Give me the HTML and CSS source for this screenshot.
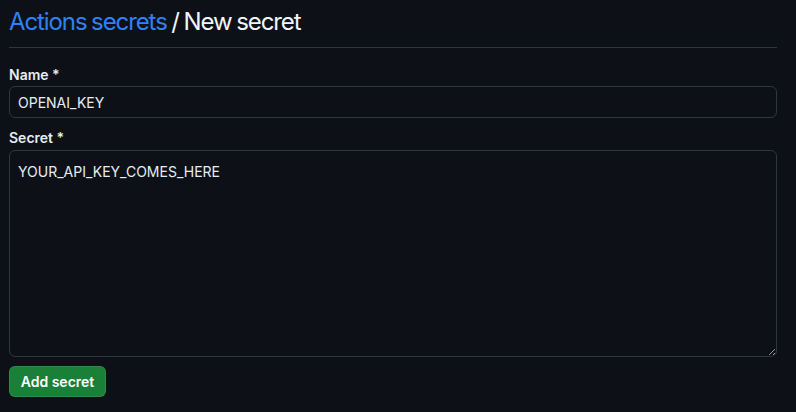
FILE: index.html
```html
<!DOCTYPE html>
<html>
<head>
<meta charset="utf-8">
<link rel="stylesheet" href="styles.css">
</head>
<body>
<div class="page">
  <h1 class="title"><a class="crumb" href="#">Actions secrets</a> / New secret</h1>
  <form class="form">
    <label class="label" for="name">Name *</label>
    <input class="input" id="name" type="text" value="OPENAI_KEY">
    <label class="label label-secret" for="secret">Secret *</label>
    <textarea class="textarea" id="secret">YOUR_API_KEY_COMES_HERE</textarea>
    <div class="actions"><button class="btn" type="button">Add secret</button></div>
  </form>
</div>
</body>
</html>
```
FILE: styles.css
```css
html, body {
  margin: 0;
  padding: 0;
  background: #0d1117;
}
body {
  font-family: Inter, "Noto Sans", sans-serif;
  color: #e6edf3;
}
.page {
  padding: 0 19px 0 9px;
}
.title {
  margin: 0;
  height: 48px;
  box-sizing: border-box;
  padding-top: 7px;
  font-size: 24px;
  font-weight: 400;
  line-height: 30px;
  letter-spacing: -1.1px;
  word-spacing: -1px;
  color: #f0f6fc;
  border-bottom: 1px solid #30363d;
}
.crumb {
  color: #2f81f7;
  text-decoration: none;
}
.form {
  display: flex;
  flex-direction: column;
  padding-top: 17px;
}
.label {
  font-size: 14px;
  font-weight: 600;
  line-height: 20px;
  margin-bottom: 1px;
}
.label-secret {
  margin-top: 10px;
  margin-bottom: 2px;
}
.input, .textarea {
  box-sizing: border-box;
  width: 100%;
  background: #0d1117;
  border: 1px solid #30363d;
  border-radius: 6px;
  color: #e6edf3;
  font-family: Inter, "Noto Sans", sans-serif;
  font-size: 14px;
  padding: 5px 8px;
  outline: none;
  margin: 0;
}
.input {
  height: 32px;
}
.textarea {
  height: 207px;
  padding-top: 11px;
  line-height: 20px;
  resize: vertical;
}
.actions {
  margin-top: 9px;
}
.btn {
  background: #1a7f37;
  color: #ffffff;
  border: 1px solid rgba(240,246,252,0.1);
  border-radius: 6px;
  height: 31px;
  width: 97px;
  font-family: Inter, "Noto Sans", sans-serif;
  font-size: 14px;
  font-weight: 600;
  padding: 0;
  white-space: nowrap;
}
```
